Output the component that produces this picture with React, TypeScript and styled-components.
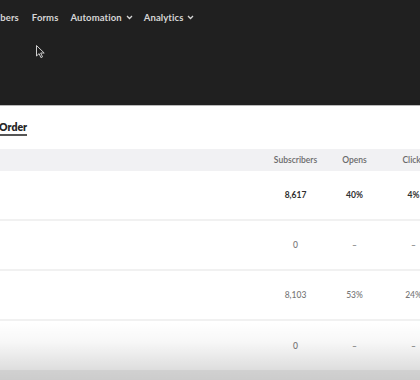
import React from 'react';
import styled, { createGlobalStyle } from 'styled-components';

const GlobalStyle = createGlobalStyle`
  html, body {
    margin: 0;
    padding: 0;
    background: #ffffff;
    overflow: hidden;
  }
  body {
    font-family: 'Lato', 'Open Sans', sans-serif;
  }
`;

const Page = styled.div`
  position: relative;
  width: 420px;
  height: 380px;
  overflow: hidden;
  background: #ffffff;
`;

const TopBar = styled.header`
  height: 106px;
  background: #202020;
  border-bottom: 1px solid #b9b9b9;
  box-sizing: border-box;
`;

const Nav = styled.nav`
  display: flex;
  align-items: center;
  height: 34px;
  margin-left: -31px;
`;

const NavItem = styled.span<{ $gap?: number }>`
  display: flex;
  align-items: center;
  gap: 4px;
  margin-right: ${(p) => p.$gap ?? 13}px;
  color: #d6d6d6;
  font-size: 9.5px;
  font-weight: 700;
  letter-spacing: 0.1px;
  white-space: nowrap;
`;

const Cursor = styled.svg`
  position: absolute;
  left: 36px;
  top: 45px;
`;

const Content = styled.section`
  display: flex;
  flex-direction: column;
  align-items: flex-start;
  padding-top: 15px;
`;

const Tab = styled.span`
  margin-left: -1px;
  padding-bottom: 1px;
  color: #262626;
  font-size: 10.5px;
  font-weight: 800;
  border-bottom: 2px solid #555;
  line-height: 12px;
`;

const Table = styled.div`
  margin-top: 13px;
  width: 520px;
`;

const cols = '1fr 59px 59px 59px 77px';

const HeadRow = styled.div`
  display: grid;
  grid-template-columns: ${cols};
  align-items: center;
  height: 22px;
  background: #f1f1f3;
`;

const HeadCell = styled.span`
  text-align: center;
  color: #6a6a6a;
  font-size: 8.5px;
  font-weight: 600;
`;

const Row = styled.div<{ $last?: boolean }>`
  display: grid;
  grid-template-columns: ${cols};
  align-items: center;
  height: 50px;
  border-bottom: ${(p) => (p.$last ? 'none' : '2px solid #f1f1f1')};
  box-sizing: border-box;
`;

const Cell = styled.span<{ $strong?: boolean }>`
  text-align: center;
  color: ${(p) => (p.$strong ? '#2e2e2e' : '#777')};
  font-size: 8.5px;
  font-weight: ${(p) => (p.$strong ? 700 : 500)};
`;

const Shade = styled.div`
  position: absolute;
  left: 0;
  right: 0;
  bottom: 0;
  height: 58px;
  background: linear-gradient(
    to bottom,
    rgba(0, 0, 0, 0) 0%,
    rgba(0, 0, 0, 0.03) 35%,
    rgba(0, 0, 0, 0.13) 82%,
    rgba(0, 0, 0, 0.18) 83%,
    rgba(0, 0, 0, 0.2) 100%
  );
  pointer-events: none;
`;

const Chevron = () => (
  <svg width="7" height="5" viewBox="0 0 7 5">
    <path d="M1 1l2.5 2.5L6 1" fill="none" stroke="#d6d6d6" strokeWidth="1.3" />
  </svg>
);

const rows = [
  { subs: '8,617', opens: '40%', clicks: '4%', strong: true },
  { subs: '0', opens: '–', clicks: '–' },
  { subs: '8,103', opens: '53%', clicks: '24%' },
  { subs: '0', opens: '–', clicks: '–' },
];

const App = () => {
  return (
    <Page>
      <GlobalStyle />
      <TopBar>
        <Nav>
          <NavItem>Subscribers</NavItem>
          <NavItem $gap={12}>Forms</NavItem>
          <NavItem $gap={11}>
            Automation <Chevron />
          </NavItem>
          <NavItem>
            Analytics <Chevron />
          </NavItem>
        </Nav>
      </TopBar>
      <Cursor width="9" height="13" viewBox="0 0 9 13">
        <path d="M0.5 0.5v10.5l2.6-2.4 1.8 4 1.6-0.7-1.8-3.9h3.5z" fill="#1e1e1e" stroke="#cfcfcf" strokeWidth="1" />
      </Cursor>
      <Content>
        <Tab>Order</Tab>
        <Table>
          <HeadRow>
            <span />
            <HeadCell>Subscribers</HeadCell>
            <HeadCell>Opens</HeadCell>
            <HeadCell>Clicks</HeadCell>
            <HeadCell>Unsubscribes</HeadCell>
          </HeadRow>
          {rows.map((r, i) => (
            <Row key={i} $last={i === rows.length - 1}>
              <span />
              <Cell $strong={r.strong}>{r.subs}</Cell>
              <Cell $strong={r.strong}>{r.opens}</Cell>
              <Cell $strong={r.strong}>{r.clicks}</Cell>
              <Cell>–</Cell>
            </Row>
          ))}
        </Table>
      </Content>
      <Shade />
    </Page>
  );
};

export default App;
